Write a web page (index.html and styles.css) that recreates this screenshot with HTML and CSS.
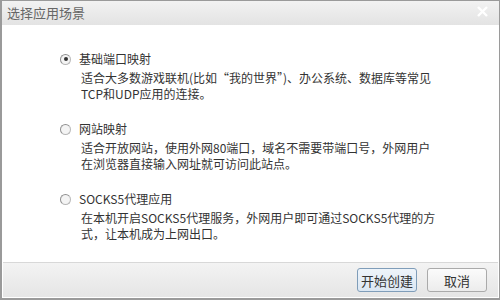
FILE: index.html
```html
<!DOCTYPE html>
<html>
  <head>
    <meta charset="utf-8">
    <title>选择应用场景</title>
    <link rel="stylesheet" href="styles.css">
  </head>
  <body>
    <div class="dialog">
      <div class="titlebar">
        <span class="title">选择应用场景</span>
        <span class="close">
          <svg width="11" height="11" viewBox="0 0 11 11">
            <path d="M1 1L10 10M10 1L1 10" stroke="#fff" stroke-width="2.4"/>
          </svg>
        </span>
      </div>

      <div class="content">
        <div class="option">
          <div class="label"><span class="radio checked"></span>基础端口映射</div>
          <div class="desc">适合大多数游戏联机(比如“我的世界”)、办公系统、数据库等常见<br>TCP和UDP应用的连接。</div>
        </div>
        <div class="option">
          <div class="label"><span class="radio"></span>网站映射</div>
          <div class="desc">适合开放网站，使用外网80端口，域名不需要带端口号，外网用户<br>在浏览器直接输入网址就可访问此站点。</div>
        </div>
        <div class="option">
          <div class="label"><span class="radio"></span>SOCKS5代理应用</div>
          <div class="desc">在本机开启SOCKS5代理服务，外网用户即可通过SOCKS5代理的方<br>式，让本机成为上网出口。</div>
        </div>
      </div>

      <div class="footer">
        <button type="button" class="btn primary">开始创建</button>
        <button type="button" class="btn">取消</button>
      </div>
    </div>
  </body>
</html>
```

FILE: styles.css
```css
/* 全体 */
body {
  margin: 0;
  font-family: "Noto Sans CJK SC", "Liberation Sans", sans-serif;
  font-size: 12px;
  color: #333;
}

.dialog {
  width: 500px;
  height: 300px;
  box-sizing: border-box;
  border: 1px solid #9a9a9a;
  border-left-width: 2px;
  border-bottom-width: 2px;
  background: #fff;
  display: flex;
  flex-direction: column;
}

/* タイトルバー */
.titlebar {
  height: 24px;
  background: linear-gradient(#f2f2f2, #e3e3e3);
  display: flex;
  align-items: center;
  justify-content: space-between;
  padding: 0 11px 0 5px;
}

.title {
  font-size: 13px;
  color: #666;
  line-height: 24px;
}

.close {
  display: flex;
  margin-top: -3px;
}

/* 選択肢 */
.content {
  flex: 1;
  padding: 26px 0 0 58px;
}

.option {
  margin-bottom: 19px;
}

.label {
  display: flex;
  align-items: center;
  line-height: 16px;
  color: #333;
}

.radio {
  width: 9px;
  height: 9px;
  border: 1px solid #b8b8b8;
  border-top-color: #909090;
  border-left-color: #909090;
  border-radius: 50%;
  background: #f4f4f4;
  margin-right: 8px;
  display: flex;
  align-items: center;
  justify-content: center;
}

.radio.checked::after {
  content: "";
  width: 4px;
  height: 4px;
  border-radius: 50%;
  background: #333;
}

.desc {
  margin: 3px 0 0 21px;
  line-height: 16px;
  color: #333;
}

/* ボタン */
.footer {
  height: 35px;
  box-sizing: border-box;
  border-top: 1px solid #d8d8d8;
  background: linear-gradient(#f3f3f3, #e5e5e5);
  display: flex;
  justify-content: flex-end;
  align-items: center;
  gap: 10px;
  padding: 0 11px 0 0;
  margin: 0 1px 1px;
}

.btn {
  width: 60px;
  height: 24px;
  padding: 0;
  font-family: "Noto Sans CJK SC", sans-serif;
  font-size: 13px;
  color: #333;
  background: linear-gradient(#fbfbfb, #ececec);
  border: 1px solid #aaa;
  border-radius: 3px;
  cursor: pointer;
}

.btn.primary {
  background: linear-gradient(#eef4fa, #dbe7f3);
  border-color: #7f9db9;
}
```
